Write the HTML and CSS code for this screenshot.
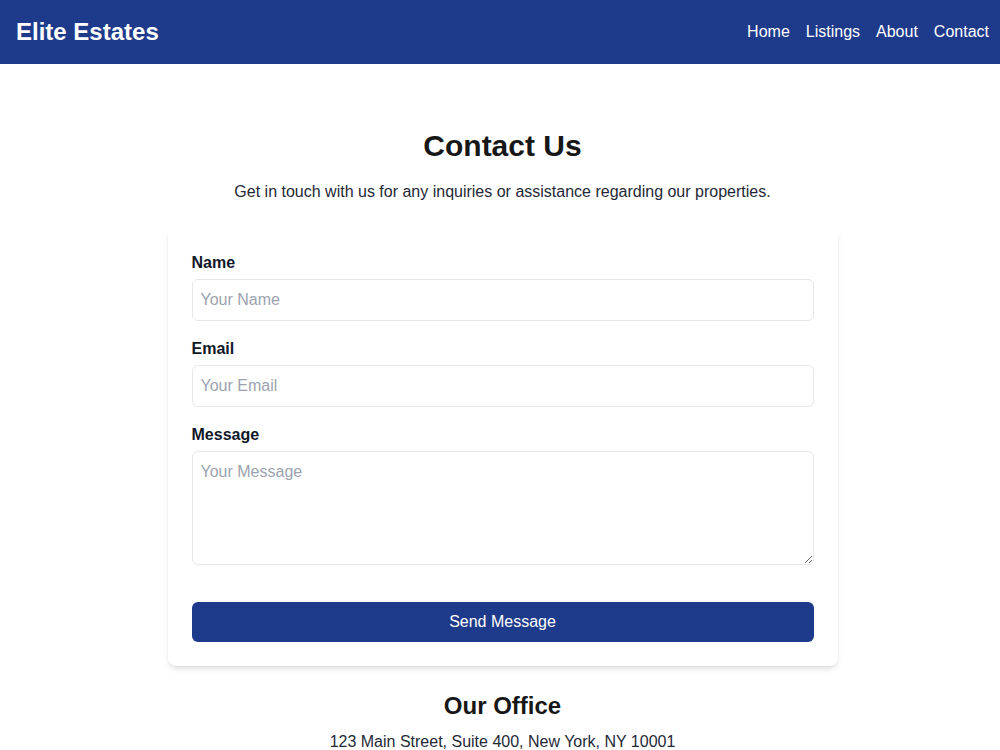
FILE: index.html
```html
<!DOCTYPE html>
<html lang="en">

<head>
    <meta charset="UTF-8">
    <meta name="viewport" content="width=device-width, initial-scale=1.0">
    <title>Contact - Elite Estates</title>
    <link rel="stylesheet" href="styles.css">
</head>

<body>
    <header class="site-header">
        <h1 class="brand">Elite Estates</h1>
        <nav class="nav">
            <a href="#">Home</a>
            <a href="#">Listings</a>
            <a href="#">About</a>
            <a href="#">Contact</a>
        </nav>
    </header>

    <main class="contact">
        <h2 class="page-title">Contact Us</h2>
        <p class="intro">Get in touch with us for any inquiries or assistance regarding our properties.</p>

        <form class="contact-form">
            <div class="field">
                <label for="name">Name</label>
                <input type="text" id="name" placeholder="Your Name">
            </div>
            <div class="field">
                <label for="email">Email</label>
                <input type="email" id="email" placeholder="Your Email">
            </div>
            <div class="field field-last">
                <label for="message">Message</label>
                <textarea id="message" rows="4" placeholder="Your Message"></textarea>
            </div>
            <button type="submit" class="send-btn">Send Message</button>
        </form>

        <section class="office">
            <h3>Our Office</h3>
            <p>123 Main Street, Suite 400, New York, NY 10001</p>
        </section>
    </main>
</body>

</html>
```

FILE: styles.css
```css
* {
    box-sizing: border-box;
}

body {
    margin: 0;
    font-family: "Liberation Sans", Arial, Helvetica, sans-serif;
    color: #111827;
    background: #fff;
}

.site-header {
    height: 64px;
    background: #1e3a8a;
    color: #fff;
    display: flex;
    align-items: center;
    justify-content: space-between;
    padding: 0 11px 0 16px;
}

.brand {
    margin: 0;
    font-size: 24px;
    line-height: 32px;
    font-weight: bold;
}

.nav {
    display: flex;
    gap: 16px;
}

.nav a {
    color: #fff;
    text-decoration: none;
    font-size: 16px;
    line-height: 24px;
}

.contact {
    padding: 64px 0 0 5px;
    display: flex;
    flex-direction: column;
    align-items: center;
}

.page-title {
    margin: 0 0 16px;
    font-size: 30px;
    line-height: 36px;
    font-weight: bold;
    color: #171717;
}

.intro {
    margin: 0 0 23px;
    font-size: 16px;
    line-height: 24px;
    color: #1f2937;
}

.contact-form {
    width: 670px;
    background: #fff;
    border-radius: 8px;
    padding: 24px;
    box-shadow: 0 4px 6px -1px rgba(0, 0, 0, 0.1), 0 2px 4px -2px rgba(0, 0, 0, 0.1);
}

.field {
    margin-bottom: 16px;
}

.field-last {
    margin-bottom: 37px;
}

.field label {
    display: block;
    font-size: 16px;
    line-height: 24px;
    font-weight: bold;
    margin-bottom: 4px;
}

.field input,
.field textarea {
    display: block;
    width: 100%;
    padding: 8px;
    border: 1px solid #e5e7eb;
    border-radius: 6px;
    font-family: inherit;
    font-size: 16px;
    line-height: 24px;
    color: #111827;
}

.field input::placeholder,
.field textarea::placeholder {
    color: #9ca3af;
}

.send-btn {
    display: block;
    width: 100%;
    padding: 8px;
    border: none;
    border-radius: 6px;
    background: #1e3a8a;
    color: #fff;
    font-family: inherit;
    font-size: 16px;
    line-height: 24px;
    cursor: pointer;
}

.office {
    margin-top: 24px;
    text-align: center;
}

.office h3 {
    margin: 0 0 8px;
    font-size: 24px;
    line-height: 32px;
    font-weight: bold;
    color: #171717;
}

.office p {
    margin: 0;
    font-size: 16px;
    line-height: 24px;
    color: #1f2937;
}
```
